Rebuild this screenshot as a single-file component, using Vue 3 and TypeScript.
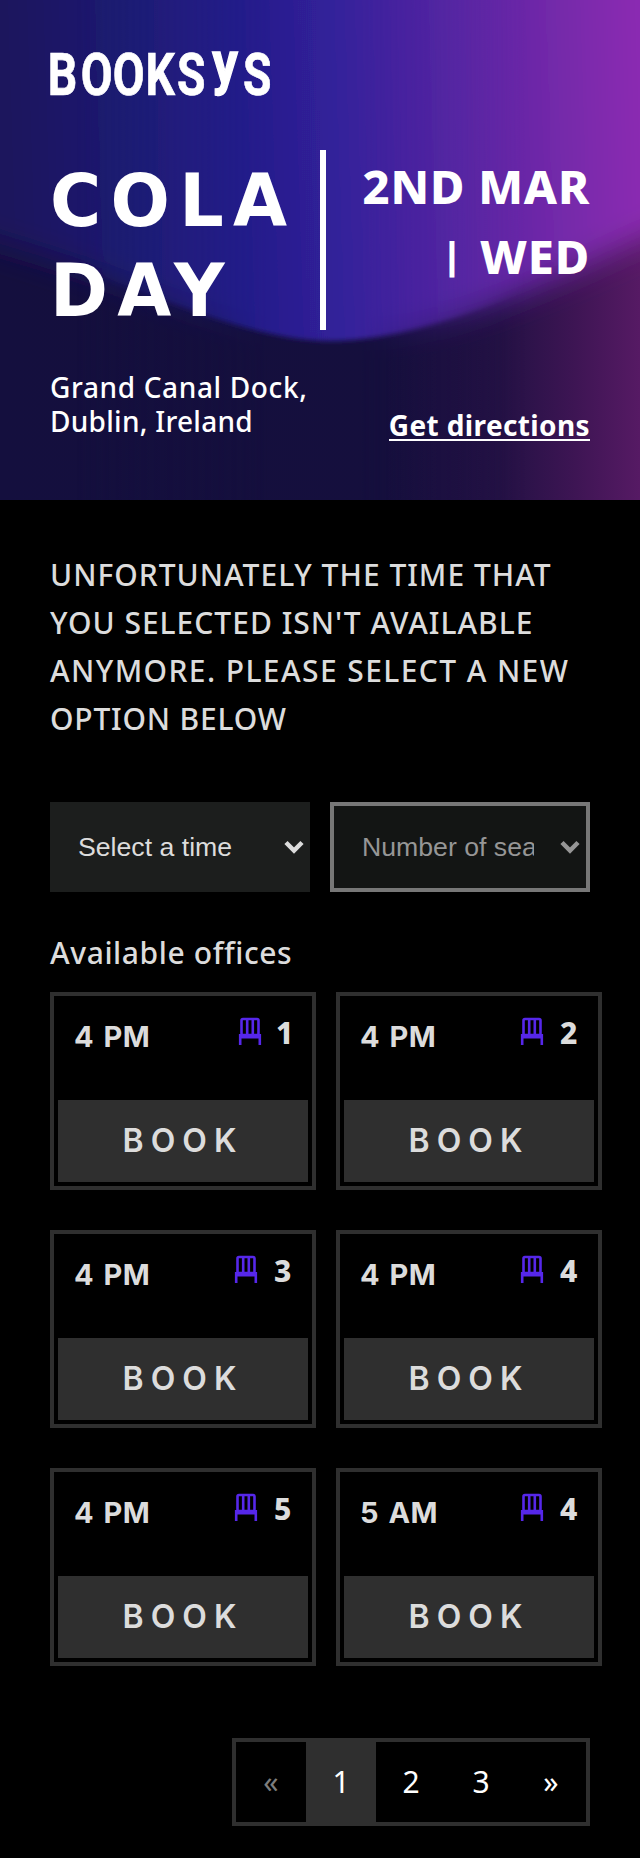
<script setup lang="ts">
interface Slot {
  time: string
  seats: number
}

const notice: string[] = [
  'Unfortunately the time that',
  "you selected isn't available",
  'anymore. Please select a new',
  'option below',
]

const slots: Slot[] = [
  { time: '4 PM', seats: 1 },
  { time: '4 PM', seats: 2 },
  { time: '4 PM', seats: 3 },
  { time: '4 PM', seats: 4 },
  { time: '4 PM', seats: 5 },
  { time: '5 AM', seats: 4 },
]

const pages: string[] = ['«', '1', '2', '3', '»']
</script>

<template>
  <main class="page">
    <header class="hero">
      <svg class="hero-bg" viewBox="0 0 640 500" preserveAspectRatio="none" aria-hidden="true">
        <defs>
          <linearGradient id="glow" gradientUnits="userSpaceOnUse" x1="0" y1="20" x2="640" y2="0">
            <stop offset="0" stop-color="#1a165c" />
            <stop offset="0.17" stop-color="#1e1a70" />
            <stop offset="0.36" stop-color="#221e88" />
            <stop offset="0.52" stop-color="#33209a" />
            <stop offset="0.72" stop-color="#5826a3" />
            <stop offset="0.88" stop-color="#7629aa" />
            <stop offset="1" stop-color="#8c2bb2" />
          </linearGradient>
          <linearGradient id="night" x1="0" y1="0" x2="1" y2="0">
            <stop offset="0" stop-color="#140f3e" />
            <stop offset="0.6" stop-color="#150f3d" />
            <stop offset="0.78" stop-color="#231144" />
            <stop offset="0.9" stop-color="#3e1554" />
            <stop offset="1" stop-color="#561a64" />
          </linearGradient>
          <linearGradient id="centre" x1="0" y1="0" x2="1" y2="0">
            <stop offset="0.12" stop-color="#000" />
            <stop offset="0.42" stop-color="#fff" />
            <stop offset="0.56" stop-color="#fff" />
            <stop offset="0.82" stop-color="#000" />
          </linearGradient>
          <mask id="focus" maskUnits="userSpaceOnUse" x="0" y="0" width="640" height="500">
            <rect width="640" height="500" fill="url(#centre)" />
          </mask>
          <filter id="soft" x="-20%" y="-20%" width="140%" height="140%"><feGaussianBlur stdDeviation="15" /></filter>
          <filter id="crisp" x="-20%" y="-20%" width="140%" height="140%"><feGaussianBlur stdDeviation="2.5" /></filter>
        </defs>
        <rect width="640" height="500" fill="url(#night)" />
        <path d="M-100-100H740V205Q690 220 640 240C550 281 450 332 370 334H285C220 326 130 281 0 244L-100 214Z" fill="url(#glow)" filter="url(#soft)" />
        <g mask="url(#focus)">
          <rect width="640" height="500" fill="url(#night)" />
          <path d="M-100-100H740V205Q690 220 640 240C540 285 430 341 330 341C240 341 130 281 0 244L-100 214Z" fill="url(#glow)" filter="url(#crisp)" />
        </g>
      </svg>

      <svg class="logo" width="222" height="46" viewBox="0 0 222 46" role="img" aria-label="Booksys">
        <g transform="scale(.77 1)" font-size="60" font-weight="700">
          <text x="-3 40 81.5 124 165" y="43.5">BOOKS</text>
          <text class="tall" x="191.5" y="31.5" transform="scale(1.1 1)">y</text>
          <text x="250.5" y="43.5">S</text>
        </g>
      </svg>

      <div class="headline">
        <h1><span>COLA<br>DAY</span></h1>
        <p class="date">2ND MAR<br><span class="bar">|</span> WED</p>
      </div>

      <div class="venue">
        <address><span>Grand Canal Dock,</span><br>Dublin, Ireland</address>
        <a class="directions">Get directions</a>
      </div>
    </header>

    <section class="content">
      <p class="notice">
        <span v-for="line in notice" :key="line">{{ line }}</span>
      </p>

      <div class="filters">
        <div class="select">
          <span class="value">Select a time</span>
          <svg width="20" height="14" viewBox="0 0 20 14"><path d="M2 2.5l8 8 8-8" /></svg>
        </div>
        <div class="select disabled">
          <span class="value">Number of seats</span>
          <svg width="20" height="14" viewBox="0 0 20 14"><path d="M2 2.5l8 8 8-8" /></svg>
        </div>
      </div>

      <h2>Available offices</h2>
      <div class="grid">
        <article v-for="(slot, i) in slots" :key="i" class="card">
          <div class="info">
            <span class="time">{{ slot.time }}</span>
            <span class="seats">
              <svg width="24" height="30" viewBox="0 0 24 30">
                <rect x="3.5" y="2" width="17" height="16" rx="1.5" />
                <path d="M9.2 2v15M14.8 2v15M2.2 28V17M21.8 28V17" />
                <path class="seat" d="M1.5 17h21v4.5h-21z" />
              </svg>
              <b :class="{ one: slot.seats === 1 }">{{ slot.seats }}</b>
            </span>
          </div>
          <button type="button">BOOK</button>
        </article>
      </div>

      <nav class="pager">
        <a v-for="(p, i) in pages" :key="p" :class="{ muted: i === 0, active: i === 1 }">{{ p }}</a>
      </nav>
    </section>
  </main>
</template>

<style>
body {
  margin: 0;
  background: #000;
}
</style>

<style scoped>
* {
  box-sizing: border-box;
}
.page {
  height: 1858px;
  overflow: hidden;
  background: #000;
  color: #dcdcdc;
  font-family: "Noto Sans", sans-serif;
}
.hero {
  position: relative;
  height: 500px;
  padding: 51px 50px 0;
  color: #fff;
  overflow: hidden;
}
.hero-bg {
  position: absolute;
  inset: 0;
  width: 640px;
  height: 500px;
}
.logo {
  position: relative;
  display: block;
  fill: #fff;
  stroke: #fff;
  stroke-width: 0.7;
  font-family: Roboto, sans-serif;
  overflow: visible;
}
.logo .tall {
  stroke-width: 1.4;
}
.headline {
  position: relative;
  display: flex;
  justify-content: space-between;
  margin-top: 53px;
  height: 180px;
}
h1 {
  margin: 0;
  padding-top: 6px;
  width: 276px;
  border-right: 6px solid #fff;
  font: 700 73.5px/90px "DejaVu Sans", sans-serif;
  letter-spacing: 9.8px;
  white-space: nowrap;
}
h1 span {
  display: inline-block;
  transform: scaleX(0.95);
  transform-origin: left;
}
.date {
  margin: 1px 0 0;
  font-size: 47px;
  font-weight: 800;
  line-height: 70px;
  letter-spacing: 0.8px;
  text-align: right;
  white-space: nowrap;
}
.bar {
  position: relative;
  top: -5px;
  margin-right: 5px;
  font-size: 37px;
  font-weight: 900;
  line-height: 1;
}
.venue {
  position: relative;
  display: flex;
  justify-content: space-between;
  margin-top: 40px;
  font-size: 28px;
  line-height: 34px;
}
address {
  font-style: normal;
  font-weight: 500;
  letter-spacing: 0.28px;
}
address span {
  letter-spacing: 0.64px;
}
.directions {
  margin-top: 38px;
  height: 33px;
  font-weight: 700;
  letter-spacing: 0.38px;
  border-bottom: 2px solid #fff;
}
.content {
  padding: 51px 50px 0;
}
.notice {
  margin: 0;
  font-size: 30px;
  font-weight: 500;
  line-height: 48px;
  letter-spacing: 1px;
  text-transform: uppercase;
}
.notice span {
  display: block;
  white-space: nowrap;
}
.notice span:nth-child(3) {
  letter-spacing: 1.4px;
}
.notice span:nth-child(4) {
  letter-spacing: 0.8px;
}
.filters {
  display: flex;
  gap: 20px;
  margin-top: 59px;
}
.select {
  display: flex;
  align-items: center;
  justify-content: space-between;
  width: 260px;
  height: 90px;
  padding: 0 6px 0 28px;
  background: #1c1e1d;
  color: #dcdcdc;
  font: 26.667px "Liberation Sans", Arial, sans-serif;
}
.value {
  overflow: hidden;
  width: 172px;
  white-space: nowrap;
}
.select svg {
  fill: none;
  stroke: currentColor;
  stroke-width: 4.5;
}
.disabled {
  border: 4px solid #777;
  background: #131514;
  color: #969696;
}
h2 {
  margin: 41px 0 0;
  font-size: 30px;
  font-weight: 500;
  line-height: 40px;
  letter-spacing: 0.6px;
}
.grid {
  display: grid;
  grid-template-columns: 266px 266px;
  gap: 40px 20px;
  margin-top: 19px;
}
.card {
  height: 198px;
  padding: 4px;
  border: 4px solid #2f2f2f;
  display: flex;
  flex-direction: column;
  justify-content: space-between;
}
.info {
  display: flex;
  justify-content: space-between;
  padding: 14px 17px 0 16px;
}
.time {
  margin-top: 5px;
  font: 700 29px/36px Inter, sans-serif;
  letter-spacing: 0.5px;
  word-spacing: 2px;
}
.seats {
  display: flex;
  height: 37px;
}
.seats svg {
  margin: 3px 16px 0 0;
  fill: none;
  stroke: #5627ea;
  stroke-width: 2.6;
}
.seats .seat {
  fill: #5627ea;
  stroke: none;
}
.seats b {
  width: 17px;
  font-size: 30px;
  font-weight: 800;
  line-height: 38px;
}
.seats .one {
  width: 15px;
  margin-left: -2px;
}
button {
  height: 82px;
  padding: 0;
  border: 0;
  background: #2f2f2f;
  color: #dcdcdc;
  font: 600 32px/82px Inter, sans-serif;
  letter-spacing: 7px;
}
.pager {
  display: flex;
  width: 358px;
  height: 88px;
  margin: 72px 0 0 auto;
  border: 4px solid #2f2f2f;
}
.pager a {
  width: 70px;
  color: #fff;
  font-size: 30px;
  line-height: 79px;
  text-align: center;
}
.pager .muted {
  color: #7d7d7d;
}
.pager .active {
  background: #2f2f2f;
}
</style>
